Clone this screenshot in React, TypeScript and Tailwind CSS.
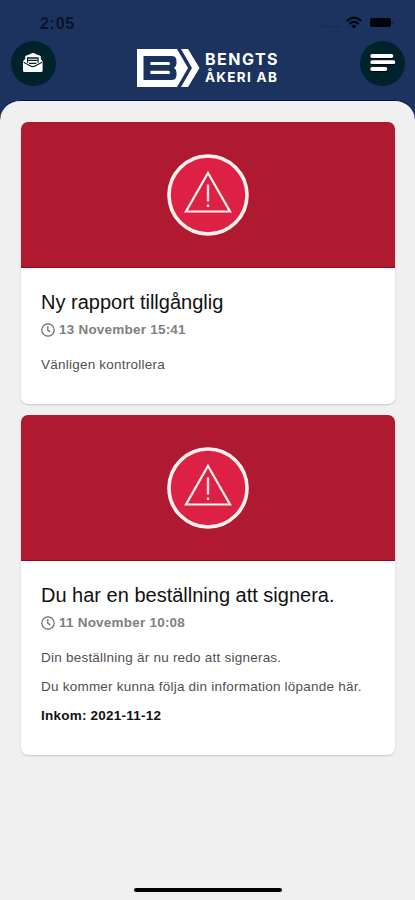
import type { ReactNode } from "react";

function EnvelopeIcon() {
  return (
    <svg width="22" height="20" viewBox="0 0 22 20" className="block">
      <path d="M1 8.2 3.2 6V3.6Q3.2 2.6 4.4 2.4Q7 2 8.2 1Q11-.8 13.8 1Q15 2 17.6 2.4Q18.8 2.6 18.8 3.6V6L20.6 8.2V17.4Q20.6 19 19 19H2.6Q1 19 1 17.4Z" fill="#fff" />
      <path d="M1.6 9.2 8 12.8Q10.8 14.4 13.6 12.8L20 9.2" fill="none" stroke="#00222d" strokeWidth="1.1" />
      <path d="M5.6 9.8V5H16V9.8M6.4 7.4H15M7 10.3H14.4" fill="none" stroke="#00222d" strokeWidth="1.3" />
    </svg>
  );
}

function MenuIcon() {
  return (
    <svg width="28" height="22" viewBox="0 0 28 22" className="block">
      <path d="M4 5H24.5M4 11.2H26.5M4 18H19.5" stroke="#00000c" strokeWidth="3.8" />
      <path d="M4.2 4H23.4M4.2 10.2H25.4M4.2 17H17.4" stroke="#fff" strokeWidth="3.8" strokeLinecap="round" />
    </svg>
  );
}

function Logo() {
  return (
    <div className="flex h-[38px] items-start text-white">
      <svg width="63" height="38" viewBox="0 0 63 38" className="block shrink-0">
        <path d="M0 0H40L51 19 40 38H0Z" fill="#fff" />
        <path fillRule="evenodd" d="M6.5 7H34.5Q39.5 7 39.5 12V14.5Q39.5 17.6 37 19Q39.5 20.4 39.5 23.5V26Q39.5 31 34.5 31H6.5ZM13.5 13V16H31.5Q33 16 33 14.5Q33 13 31.5 13ZM13.5 21.8V25H31.5Q33 25 33 23.4Q33 21.8 31.5 21.8Z" fill="#1b335e" />
        <path d="M44 0H51L62.5 19 51 38H44L55 19Z" fill="#fff" />
      </svg>
      <div className="ml-[5px] flex flex-col whitespace-nowrap font-['Inter',sans-serif] font-bold">
        <span className="text-[16px] leading-[20px] tracking-[1.5px]">BENGTS</span>
        <span className="text-[13.5px] leading-[17px] tracking-[1.3px]">ÅKERI AB</span>
      </div>
    </div>
  );
}

function WarningBanner() {
  return (
    <div className="flex h-[146px] items-center justify-center border-b border-[#9d0619] bg-[#b01a31]">
      <svg width="82" height="82" viewBox="0 0 82 82">
        <circle cx="41" cy="41" r="39" fill="#dc2145" stroke="#fff2ed" strokeWidth="3.6" />
        <path d="M41 19 63 57.5H19Z" fill="none" stroke="#fff2ed" strokeWidth="2.2" />
        <path d="M41 30.5V47.5M41 50.5V53" stroke="#ffdce0" strokeWidth="2.4" />
      </svg>
    </div>
  );
}

function ClockIcon() {
  return (
    <svg width="14" height="14" viewBox="0 0 14 14" className="block" fill="none" stroke="#666" strokeWidth="1.2">
      <circle cx="7" cy="7" r="6.2" />
      <path d="M6.8 3V7.3L9.3 8.8" />
    </svg>
  );
}

function Card({ title, date, height, children }: { title: string; date: string; height: string; children: ReactNode }) {
  return (
    <article className={`${height} overflow-hidden rounded-[7px] bg-white shadow-[0_1px_2px_rgba(0,0,0,0.18)]`}>
      <WarningBanner />
      <div className="px-5 pt-[22px]">
        <h2 className="whitespace-nowrap text-[20px] leading-6 text-[#111]">{title}</h2>
        <div className="mt-[6px] flex h-5 items-center gap-1">
          <ClockIcon />
          <span className="text-[13.5px] font-bold tracking-[0.22px] text-[#808080]">{date}</span>
        </div>
        <div className="mt-[10px] whitespace-nowrap text-[13.5px] leading-[29px] tracking-[0.23px] text-[#505050]">{children}</div>
      </div>
    </article>
  );
}

export default function App() {
  return (
    <div className="flex h-[900px] w-[415px] flex-col overflow-hidden bg-[#1b335e] font-['Liberation_Sans',Arial,sans-serif]">
      <div className="flex h-10 shrink-0 items-start justify-between pl-10 pr-[21px] pt-[14px]">
        <span className="text-[16px] font-bold leading-[19px] tracking-[0.7px] text-[#07142b]">2:05</span>
        <div className="flex items-center pt-[2px]">
          <div className="mr-[7px] mt-2 flex gap-[2px]">
            <i className="h-px w-[3px] bg-[#142748]" />
            <i className="h-px w-[3px] bg-[#142748]" />
            <i className="h-px w-[3px] bg-[#142748]" />
            <i className="h-px w-[3px] bg-[#142748]" />
          </div>
          <svg width="16" height="13" viewBox="0 0 16 13" fill="none" stroke="#010711" strokeWidth="2.2">
            <path d="M.8 5Q8-1.7 15.2 5M3.4 7.8Q8 3.8 12.6 7.8" />
            <path d="M5.5 9.7Q8 7.6 10.5 9.7L8 12.5Z" fill="#010711" stroke="none" />
          </svg>
          <div className="ml-2 h-[9px] w-[21px] rounded-[2px] bg-[#00040b]" />
          <div className="ml-px h-[3px] w-[2px] rounded-r bg-[#14233f]" />
        </div>
      </div>
      <header className="flex h-[60px] shrink-0 items-start justify-between pl-[11px] pr-[10px]">
        <button className="mt-px flex h-[45px] w-[45px] items-center justify-center rounded-full bg-[#00222d] pb-px pr-px" aria-label="Meddelanden">
          <EnvelopeIcon />
        </button>
        <div className="mt-[9px]"><Logo /></div>
        <button className="mt-px flex h-[45px] w-[45px] items-center justify-center rounded-full bg-[#00222d] pb-px" aria-label="Meny">
          <MenuIcon />
        </button>
      </header>
      <main className="flex min-h-0 flex-1 flex-col rounded-t-[20px] border-t border-[#071052] bg-[#f0f0f0] px-5 pt-[21px]">
        <div className="flex flex-col gap-[11px] pl-px">
          <Card title="Ny rapport tillgånglig" date="13 November 15:41" height="h-[282px]">
            <p>Vänligen kontrollera</p>
          </Card>
          <Card title="Du har en beställning att signera." date="11 November 10:08" height="h-[340px]">
            <p>Din beställning är nu redo att signeras.</p>
            <p>Du kommer kunna följa din information löpande här.</p>
            <p className="font-bold text-[#111]">Inkom: 2021-11-12</p>
          </Card>
        </div>
        <div className="mb-2 mt-auto h-1 w-[148px] self-center rounded-full bg-black" />
      </main>
    </div>
  );
}
